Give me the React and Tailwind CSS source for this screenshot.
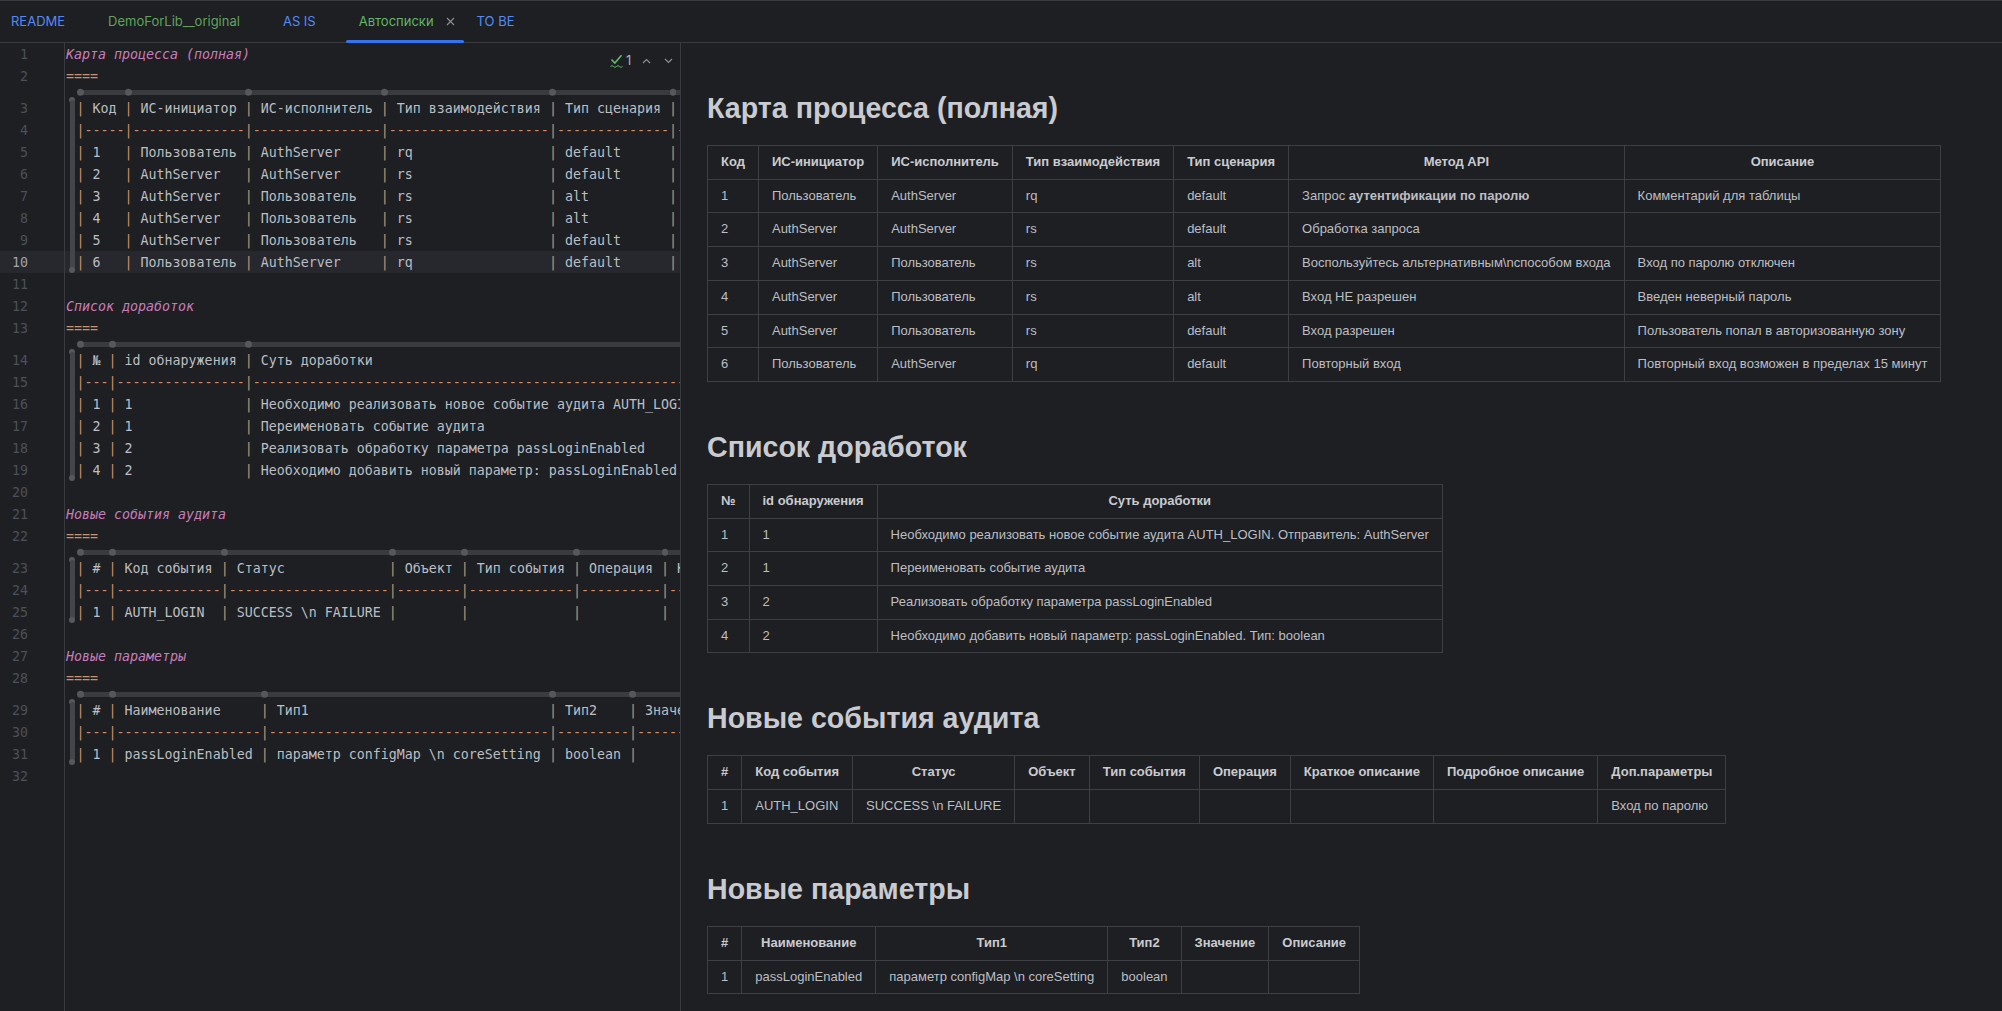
import React from 'react';

const CW = 8.007;

function buildTable(rows) {
  const n = rows[0].length;
  const widths = Array.from({ length: n }, (_, i) => Math.max(...rows.map((r) => r[i].length)) + 2);
  const line = (r) => '|' + r.map((c, i) => (' ' + c).padEnd(widths[i])).join('|') + '|';
  const sep = '|' + widths.map((w) => '-'.repeat(w)).join('|') + '|';
  const pos = [0];
  let p = 0;
  widths.forEach((w) => {
    p += w + 1;
    pos.push(p);
  });
  return { header: line(rows[0]), sep, body: rows.slice(1).map(line), pos };
}

const T1 = [
  ['Код', 'ИС-инициатор', 'ИС-исполнитель', 'Тип взаимодействия', 'Тип сценария', 'Метод API', 'Описание'],
  ['1', 'Пользователь', 'AuthServer', 'rq', 'default', 'Запрос **аутентификации по паролю**', 'Комментарий для таблицы'],
  ['2', 'AuthServer', 'AuthServer', 'rs', 'default', 'Обработка запроса', ''],
  ['3', 'AuthServer', 'Пользователь', 'rs', 'alt', 'Воспользуйтесь альтернативным\\nспособом входа', 'Вход по паролю отключен'],
  ['4', 'AuthServer', 'Пользователь', 'rs', 'alt', 'Вход НЕ разрешен', 'Введен неверный пароль'],
  ['5', 'AuthServer', 'Пользователь', 'rs', 'default', 'Вход разрешен', 'Пользователь попал в авторизованную зону'],
  ['6', 'Пользователь', 'AuthServer', 'rq', 'default', 'Повторный вход', 'Повторный вход возможен в пределах 15 минут'],
];

const T2 = [
  ['№', 'id обнаружения', 'Суть доработки'],
  ['1', '1', 'Необходимо реализовать новое событие аудита AUTH_LOGIN. Отправитель: AuthServer'],
  ['2', '1', 'Переименовать событие аудита'],
  ['3', '2', 'Реализовать обработку параметра passLoginEnabled'],
  ['4', '2', 'Необходимо добавить новый параметр: passLoginEnabled. Тип: boolean'],
];

const T3 = [
  ['#', 'Код события', 'Статус', 'Объект', 'Тип события', 'Операция', 'Краткое описание', 'Подробное описание', 'Доп.параметры'],
  ['1', 'AUTH_LOGIN', 'SUCCESS \\n FAILURE', '', '', '', '', '', 'Вход по паролю'],
];

const T4 = [
  ['#', 'Наименование', 'Тип1', 'Тип2', 'Значение', 'Описание'],
  ['1', 'passLoginEnabled', 'параметр configMap \\n coreSetting', 'boolean', '', ''],
];

const SECTIONS = [
  { title: 'Карта процесса (полная)', rows: T1 },
  { title: 'Список доработок', rows: T2 },
  { title: 'Новые события аудита', rows: T3 },
  { title: 'Новые параметры', rows: T4 },
];

function buildLines() {
  const lines = [];
  let n = 1;
  SECTIONS.forEach((s) => {
    lines.push({ kind: 'h', n: n++, text: s.title });
    lines.push({ kind: 'eq', n: n++ });
    const t = buildTable(s.rows);
    lines.push({ kind: 'inlay', pos: t.pos });
    const trs = [t.header, t.sep, ...t.body];
    trs.forEach((txt, i) =>
      lines.push({ kind: 'row', n: n++, text: txt, sep: i === 1, first: i === 0, last: i === trs.length - 1 })
    );
    lines.push({ kind: 'blank', n: n++ });
  });
  return lines;
}

const LINES = buildLines();
const ACTIVE = 10;

function Gutter({ n, active }) {
  return (
    <div className="w-[65px] shrink-0 border-r border-[#393b40] flex items-center pt-[2px]">
      <span className={`w-[28px] text-right ${active ? 'text-[#a1a3ab]' : 'text-[#4b5059]'}`}>{n}</span>
    </div>
  );
}

function RowText({ text, sep }) {
  const parts = text.split('|');
  return parts.map((p, i) => (
    <React.Fragment key={i}>
      {i > 0 && <span className="text-[#cf8e6d]">|</span>}
      {p && <span className={sep ? 'text-[#cf8e6d]' : 'text-[#bcbec4]'}>{p}</span>}
    </React.Fragment>
  ));
}

function CodeLine({ l }) {
  if (l.kind === 'inlay') {
    return (
      <div className="flex h-[10px]">
        <Gutter n="" />
        <div className="flex-1 min-w-0 overflow-hidden flex items-center pl-[12.5px]">
          <div className="relative h-[5px] flex-1 rounded-l-full bg-[#393b3f]">
            {l.pos.map((p) => (
              <span
                key={p}
                className="absolute top-1/2 -translate-y-1/2 w-[6.5px] h-[6.5px] rounded-full bg-[#55585d]"
                style={{ left: p * CW - 0.5 }}
              />
            ))}
          </div>
        </div>
      </div>
    );
  }
  const active = l.n === ACTIVE;
  return (
    <div className={`flex h-[22px] ${active ? 'bg-[#26282e]' : ''}`}>
      <Gutter n={l.n} active={active} />
      <div className="flex-1 min-w-0 overflow-hidden flex items-center whitespace-pre pl-[1px]">
        {l.kind === 'h' && <span className="italic text-[#c77dbb] pt-[2px]">{l.text}</span>}
        {l.kind === 'eq' && <span className="text-[#cf8e6d] pt-[2px]">====</span>}
        {l.kind === 'row' && (
          <>
            <div className="ml-[3px] w-[6px] h-full shrink-0 flex flex-col items-center">
              {l.first && <span className="w-[6px] h-[6px] rounded-full bg-[#55585d] shrink-0" />}
              <span
                className={`w-[5px] flex-1 bg-[#43454a] ${l.first ? 'rounded-t-full -mt-[3px]' : ''} ${
                  l.last ? 'rounded-b-full -mb-[3px]' : ''
                }`}
              />
              {l.last && <span className="w-[6px] h-[6px] rounded-full bg-[#55585d] shrink-0" />}
            </div>
            <div className="ml-[1.5px] pt-[2px]">
              <RowText text={l.text} sep={l.sep} />
            </div>
          </>
        )}
      </div>
    </div>
  );
}

function Tab({ label, color, active, first }) {
  return (
    <div className={`relative flex items-center h-full ${first ? 'pl-[11px]' : 'pl-[12.5px]'} pr-[6px]`}>
      <span className={`text-[13px] ${color}`}>{label}</span>
      <span className="ml-[8.5px] w-[16px] h-[16px] flex items-center justify-center">
        {active && (
          <svg width="9" height="9" viewBox="0 0 9 9">
            <path d="M1 1L8 8M8 1L1 8" stroke="#8c8f96" strokeWidth="1.1" />
          </svg>
        )}
      </span>
      {active && <span className="absolute left-0 right-0 bottom-[-1px] h-[3px] rounded-[2px] bg-[#3574f0]" />}
    </div>
  );
}

function PTable({ rows }) {
  const [head, ...body] = rows;
  return (
    <table className="border-collapse text-[13px] leading-[20.7px] whitespace-nowrap">
      <thead>
        <tr>
          {head.map((h, i) => (
            <th key={i} className="border border-[#3d3f44] px-[13px] py-[6px] font-bold text-center text-[#c9cbd0]">
              {h}
            </th>
          ))}
        </tr>
      </thead>
      <tbody>
        {body.map((r, ri) => (
          <tr key={ri}>
            {r.map((c, ci) => (
              <td key={ci} className="border border-[#3d3f44] px-[13px] py-[6px] text-left">
                {c.includes('**') ? (
                  <>
                    {c.split('**')[0]}
                    <b className="font-bold">{c.split('**')[1]}</b>
                    {c.split('**')[2]}
                  </>
                ) : (
                  c
                )}
              </td>
            ))}
          </tr>
        ))}
      </tbody>
    </table>
  );
}

export default function App() {
  return (
    <div className="w-[2002px] h-[1011px] bg-[#1e1f22] border-t border-[#393b40] flex flex-col overflow-hidden">
      {/* tab bar */}
      <div className="h-[42px] shrink-0 border-b border-[#393b40] flex items-stretch font-['Inter',sans-serif]">
        <Tab label="README" color="text-[#548af7]" first />
        <Tab label="DemoForLib__original" color="text-[#5fa35f]" />
        <Tab label="AS IS" color="text-[#548af7]" />
        <Tab label="Автосписки" color="text-[#5fb865]" active />
        <Tab label="TO BE" color="text-[#548af7]" />
      </div>

      <div className="flex-1 min-h-0 flex">
        {/* editor */}
        <div className="relative w-[681px] shrink-0 border-r border-[#393b40] flex flex-col font-['DejaVu_Sans_Mono',monospace] text-[13.3px] overflow-hidden">
          {LINES.map((l, i) => (
            <CodeLine key={i} l={l} />
          ))}
          <div className="flex-1 flex">
            <div className="w-[65px] shrink-0 border-r border-[#393b40]" />
          </div>

          {/* inspection widget */}
          <div className="absolute left-[610px] top-[8px] flex items-center font-['Inter',sans-serif] text-[13px]">
            <svg width="13" height="14" viewBox="0 0 13 14">
              <path d="M1.5 5.5L4.8 9L11.5 1.2" fill="none" stroke="#5fb865" strokeWidth="1.7" />
              <path d="M0.5 12.5q1.5 -1.8 3 0t3 0t3 0t3 0" fill="none" stroke="#5fb865" strokeWidth="1" />
            </svg>
            <span className="ml-[3px] text-[#a8b3c2]">1</span>
            <svg className="ml-[11px]" width="9" height="6" viewBox="0 0 9 6">
              <path d="M1 5L4.5 1.5L8 5" fill="none" stroke="#8c8f96" strokeWidth="1.2" />
            </svg>
            <svg className="ml-[13px]" width="9" height="6" viewBox="0 0 9 6">
              <path d="M1 1L4.5 4.5L8 1" fill="none" stroke="#8c8f96" strokeWidth="1.2" />
            </svg>
          </div>
        </div>

        {/* preview */}
        <div className="flex-1 min-w-0 overflow-hidden pl-[26px] pt-[49px] font-['Liberation_Sans',Arial,sans-serif] text-[#bcbec4]">
          {SECTIONS.map((s, i) => (
            <div key={i} className={i > 0 ? 'mt-[49px]' : ''}>
              <h2 className="text-[28.6px] leading-[33px] font-bold text-[#c9cbd0] mb-[20px]">{s.title}</h2>
              <PTable rows={s.rows} />
            </div>
          ))}
        </div>
      </div>
    </div>
  );
}
